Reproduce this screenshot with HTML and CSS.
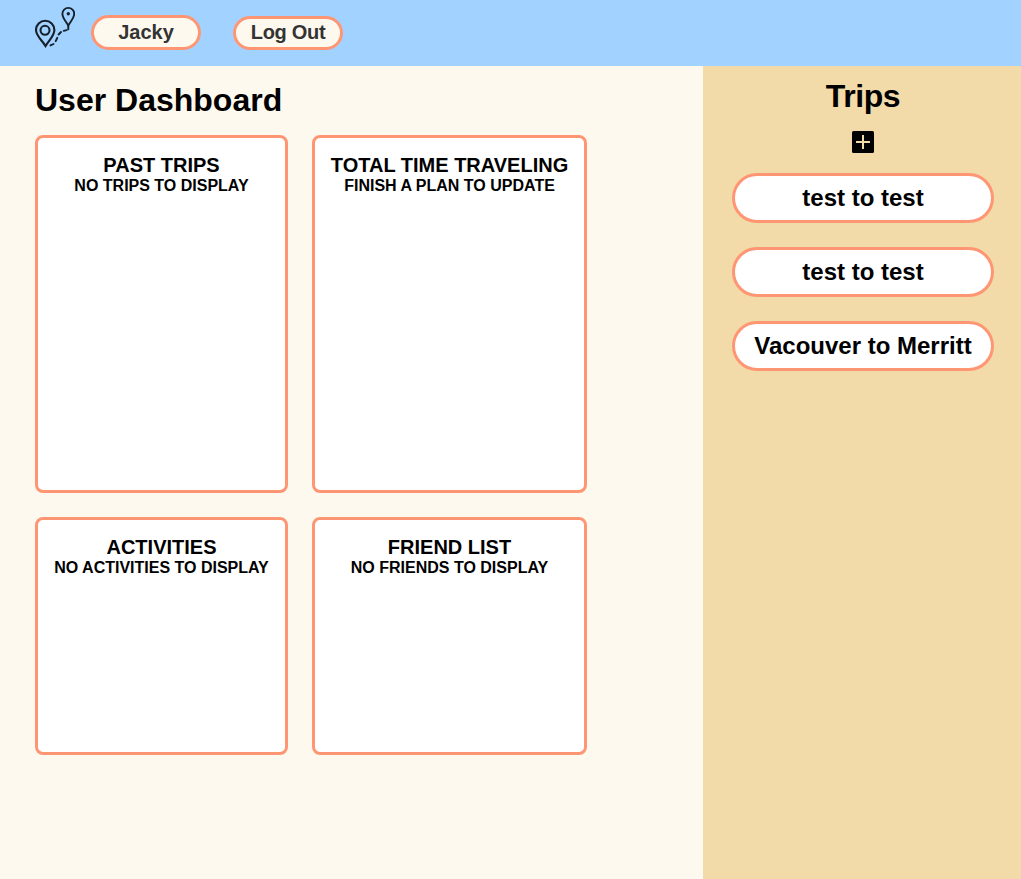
FILE: index.html
```html
<!DOCTYPE html>
<html lang="en">
<head>
<meta charset="utf-8">
<title>User Dashboard</title>
<link rel="stylesheet" href="styles.css">
</head>
<body>
<header class="navbar">
  <svg class="logo" viewBox="0 0 40 42" fill="none" stroke="#16202a">
    <path d="M10.500 40C7 34 1 30 1 24A9.200 9.200 0 0 1 19.400 24C19.400 30 14 34 10.500 40Z" stroke-width="2.100"/>
    <path d="M8.600 39.200L10.500 41L12.400 39.200Z" fill="#16202a" stroke="none"/>
    <circle cx="10" cy="24.300" r="4.500" stroke-width="2.100"/>
    <path d="M33.300 19.600C31.300 15.600 27.400 12.300 27.400 7.800A5.900 5.900 0 0 1 39.200 7.800C39.200 12.300 35.300 15.600 33.300 19.600Z" stroke-width="1.900"/>
    <circle cx="33.300" cy="7.700" r="1.700" fill="#16202a" stroke="none"/>
    <path d="M15.500 39.400L18.500 38M20.700 35.200L22.300 31.800M23.600 28.500L26 26M28.700 24.900L31.600 24.200M33.300 23.200V20" stroke-width="1.900" stroke-linecap="round"/>
  </svg>
  <button class="nav-button nav-button-user">Jacky</button>
  <button class="nav-button nav-button-logout">Log Out</button>
</header>
<div class="layout">
  <main class="dashboard">
    <h1 class="title">User Dashboard</h1>
    <div class="cards">
      <section class="card"><h2 class="card-title">PAST TRIPS</h2><p class="card-text">NO TRIPS TO DISPLAY</p></section>
      <section class="card"><h2 class="card-title">TOTAL TIME TRAVELING</h2><p class="card-text">FINISH A PLAN TO UPDATE</p></section>
      <section class="card"><h2 class="card-title">ACTIVITIES</h2><p class="card-text">NO ACTIVITIES TO DISPLAY</p></section>
      <section class="card"><h2 class="card-title">FRIEND LIST</h2><p class="card-text">NO FRIENDS TO DISPLAY</p></section>
    </div>
  </main>
  <aside class="trips">
    <h2 class="title trips-title">Trips</h2>
    <svg class="add-icon" viewBox="0 0 22 22">
      <rect width="22" height="22" rx="1.500"/>
      <path d="M11 4V18M4 11H18" stroke="#f2daa9" stroke-width="2"/>
    </svg>
    <div class="trip-list">
      <button class="trip">test to test</button>
      <button class="trip">test to test</button>
      <button class="trip">Vacouver to Merritt</button>
    </div>
  </aside>
</div>
</body>
</html>
```
FILE: styles.css
```css
* { box-sizing: border-box; }
body {
  margin: 0;
  height: 100vh;
  display: flex;
  flex-direction: column;
  font-family: "Liberation Sans", Arial, sans-serif;
  font-weight: bold;
  color: #000;
  background: #fef9ee;
}
h1, h2, p { margin: 0; }
button { font: inherit; color: inherit; cursor: pointer; padding: 0; }
.navbar {
  height: 66px;
  padding: 6px 0 0 35px;
  display: flex;
  background: #a2d2ff;
}
.logo { width: 40px; height: 42px; }
.nav-button {
  width: 110px;
  height: 35px;
  margin: 9px 0 0 16px;
  border: 3px solid #ff9673;
  border-radius: 18px;
  background: #fef9ee;
  color: #333;
  font-size: 20px;
}
.nav-button-logout {
  height: 34px;
  margin: 10px 0 0 32px;
  padding-bottom: 2px;
  letter-spacing: -0.3px;
}
.layout { flex: 1; display: flex; }
.dashboard { flex: 1; padding: 16px 0 0 35px; }
.title { font-size: 32px; line-height: 36px; }
.trips-title { letter-spacing: -0.4px; }
.cards {
  margin-top: 17px;
  display: grid;
  grid-template-columns: 253px 275px;
  grid-template-rows: 358px 238px;
  gap: 24px;
}
.card {
  padding-top: 16px;
  border: 3px solid #ff9673;
  border-radius: 8px;
  background: #fff;
  text-align: center;
}
.card-title { font-size: 20px; line-height: 22px; }
.card-text { font-size: 16px; line-height: 20px; }
.trips {
  width: 318px;
  padding: 12px 27px 0 29px;
  display: flex;
  flex-direction: column;
  align-items: center;
  background: #f2daa9;
}
.add-icon { width: 22px; height: 22px; margin-top: 17px; }
.trip-list {
  align-self: stretch;
  margin-top: 20px;
  display: flex;
  flex-direction: column;
  gap: 24px;
}
.trip {
  height: 50px;
  border: 3px solid #ff9673;
  border-radius: 25px;
  background: #fff;
  font-size: 24px;
}
```
